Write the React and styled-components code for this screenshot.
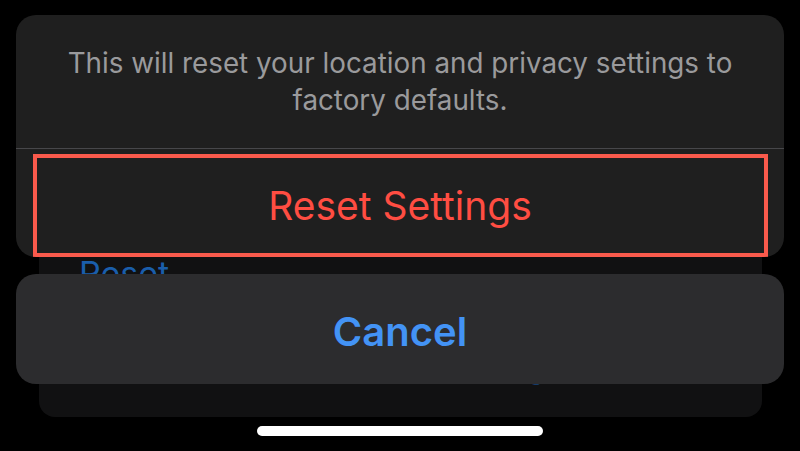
import styled, { createGlobalStyle } from 'styled-components';

const GlobalStyle = createGlobalStyle`
  html, body {
    margin: 0;
    padding: 0;
    background: #000;
  }
  body {
    font-family: Inter, 'Noto Sans', sans-serif;
    -webkit-font-smoothing: antialiased;
  }
`;

const Screen = styled.div`
  position: relative;
  width: 800px;
  height: 451px;
  overflow: hidden;
  background: #000;
  padding-top: 200px;
  box-sizing: border-box;
`;

// the dimmed settings list behind the action sheet
const BackCard = styled.div`
  margin: 0 38px 0 39px;
  height: 217px;
  border-radius: 16px;
  background: #111112;
  padding: 54px 0 0 40px;
  box-sizing: border-box;
  display: flex;
  flex-direction: column;
  gap: 51px;
`;

const BackRow = styled.div`
  font-size: 34px;
  line-height: 40px;
  color: #1a5eab;
  white-space: nowrap;
`;

const Sheet = styled.div`
  position: absolute;
  top: 15px;
  left: 16px;
  right: 16px;
  display: flex;
  flex-direction: column;
  gap: 17px;
`;

const Group = styled.div`
  background: #1f1f1f;
  border-radius: 20px;
  overflow: hidden;
`;

const Message = styled.p`
  margin: 0;
  padding: 30px 30px 0;
  height: 134px;
  box-sizing: border-box;
  text-align: center;
  font-size: 27.8px;
  line-height: 37px;
  color: #9a9a9c;
  border-bottom: 1px solid #47474a;
`;

const ActionButton = styled.div`
  position: relative;
  height: ${p => p.h}px;
  display: flex;
  align-items: center;
  justify-content: center;
  font-size: ${p => p.size}px;
  font-weight: ${p => (p.bold ? 600 : 400)};
  color: ${p => p.color};
  background: ${p => p.bg || 'transparent'};
  border-radius: ${p => (p.bg ? '20px' : '0')};
  padding-top: 4px;
  box-sizing: border-box;
`;

const Highlight = styled.span`
  position: absolute;
  top: 5px;
  bottom: 0;
  left: 17px;
  right: 16px;
  border: 4px solid #fa5a4c;
`;

const HomeIndicator = styled.div`
  position: absolute;
  left: 257px;
  bottom: 15px;
  width: 286px;
  height: 10px;
  border-radius: 5px;
  background: #fff;
`;

export default function App() {
  return (
    <>
      <GlobalStyle />
      <Screen>
        <BackCard>
          <BackRow>Reset</BackRow>
          <BackRow>Erase All Content and Settings</BackRow>
        </BackCard>
        <Sheet>
          <Group>
            <Message>
              This will reset your location and privacy settings to factory defaults.
            </Message>
            <ActionButton h={108} size={39} color="#ff4d42">
              Reset Settings
              <Highlight />
            </ActionButton>
          </Group>
          <ActionButton h={110} size={40} bold color="#4393f5" bg="#2c2c2e">
            Cancel
          </ActionButton>
        </Sheet>
        <HomeIndicator />
      </Screen>
    </>
  );
}
